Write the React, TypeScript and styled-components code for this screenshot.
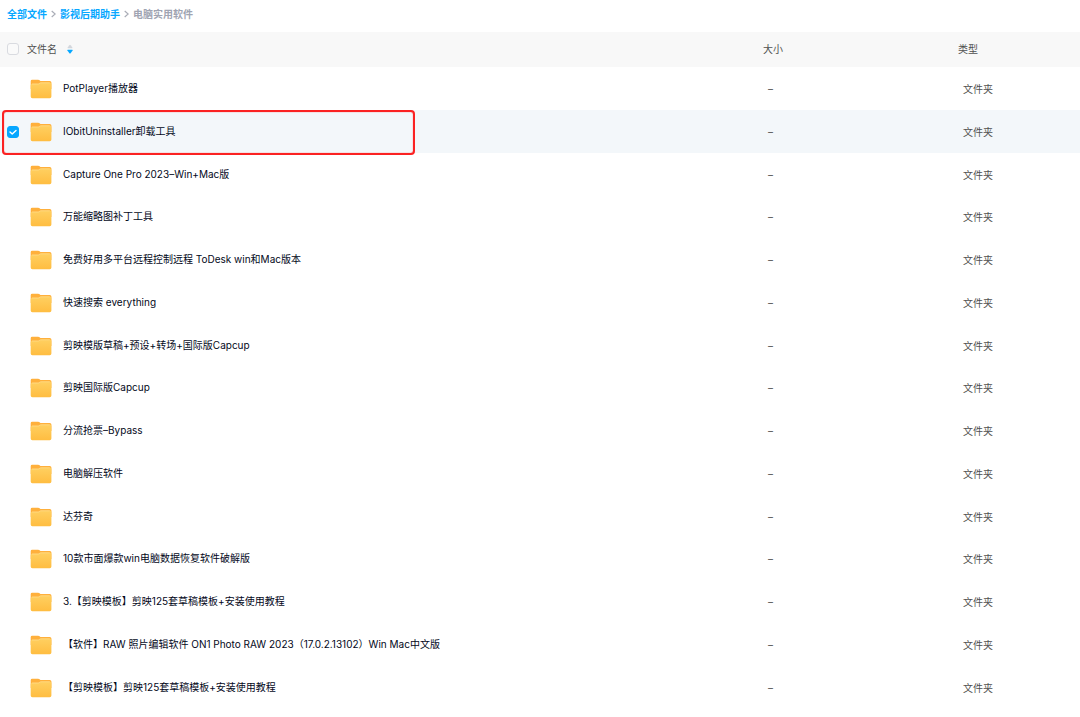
import React, { useState } from "react";
import styled, { createGlobalStyle } from "styled-components";

const Global = createGlobalStyle`
  * { box-sizing: border-box; }
  body {
    margin: 0;
    background: #fff;
    color: #03081a;
    font: 10px/16px Inter, "Noto Sans CJK SC", sans-serif;
  }
`;

const Breadcrumb = styled.nav`
  display: flex;
  align-items: center;
  gap: 4px;
  height: 32px;
  padding: 0 7px 4px;
  font-weight: 700;
`;

const Crumb = styled.a`
  color: #06a7ff;
  text-decoration: none;
`;

const CurrentCrumb = styled.span`
  color: #a0a4b2;
`;

const FileTable = styled.table`
  width: 100%;
  table-layout: fixed;
  border-collapse: collapse;
`;

const NameCol = styled.col``;
const SizeCol = styled.col`
  width: 195px;
`;
const TypeCol = styled.col`
  width: 122px;
`;

const HeadRow = styled.tr`
  height: 35px;
  background: #f8f8f8;
`;

const HeadCell = styled.th`
  padding: 0 0 1px;
  color: #505050;
  font-weight: 400;
  text-align: left;
`;

const HeadContent = styled.div`
  display: flex;
  align-items: center;
  gap: 8px;
  padding-left: 7px;
`;

const SortButton = styled.button`
  display: flex;
  align-items: center;
  gap: 9px;
  padding: 0;
  border: 0;
  background: none;
  color: inherit;
  font: inherit;
  cursor: pointer;
`;

const Row = styled.tr<{ $selected: boolean }>`
  height: 43px;
  background: ${(p) => (p.$selected ? "#f3f7fa" : "#fff")};

  &:nth-child(4n) {
    height: 42px;
  }
`;

const NameCell = styled.td`
  position: relative;
  padding: 0;
`;

const NameContent = styled.div`
  display: flex;
  align-items: center;
  padding-left: 7px;
`;

const MetaCell = styled.td`
  padding: 0 0 0 5px;
  color: #505050;
`;

const FileLink = styled.a`
  margin-left: 11px;
  padding-bottom: 2px;
  color: inherit;
  text-decoration: none;
  white-space: nowrap;
`;

const FolderSvg = styled.svg`
  flex: none;
  margin-left: 11px;
`;

const Check = styled.input<{ $quiet?: boolean }>`
  appearance: none;
  flex: none;
  width: 12px;
  height: 12px;
  margin: 0;
  border: 1px solid #d9dbe0;
  border-radius: 3px;
  background: #fafafa;
  opacity: ${(p) => (p.$quiet ? 0 : 1)};

  &:hover,
  &:focus-visible {
    opacity: 1;
  }

  &:checked {
    border-color: #06a7ff;
    background: #06a7ff;
    opacity: 1;
  }
`;

const CheckBox = styled.label`
  position: relative;
  display: flex;
  flex: none;
`;

const Tick = styled.svg`
  position: absolute;
  inset: 0;
  pointer-events: none;
`;

const Highlight = styled.span`
  position: absolute;
  top: 0;
  left: 2px;
  width: 413px;
  height: 45px;
  border: 2px solid #fb2222;
  border-radius: 4px;
  box-shadow: inset 0 0 1px #fb2222;
  pointer-events: none;
  z-index: 1;
`;

const files = [
  "PotPlayer播放器",
  "IObitUninstaller卸载工具",
  "Capture One Pro 2023–Win+Mac版",
  "万能缩略图补丁工具",
  "免费好用多平台远程控制远程 ToDesk win和Mac版本",
  "快速搜索 everything",
  "剪映模版草稿+预设+转场+国际版Capcup",
  "剪映国际版Capcup",
  "分流抢票–Bypass",
  "电脑解压软件",
  "达芬奇",
  "10款市面爆款win电脑数据恢复软件破解版",
  "3.【剪映模板】剪映125套草稿模板+安装使用教程",
  "【软件】RAW 照片编辑软件 ON1 Photo RAW 2023（17.0.2.13102）Win Mac中文版",
  "【剪映模板】剪映125套草稿模板+安装使用教程",
];

const Separator = () => (
  <svg width="5" height="8" viewBox="0 0 5 8" fill="none" stroke="#a9acb6" strokeWidth="1.2" aria-hidden="true">
    <path d="M.7 1 4.2 4 .7 7" />
  </svg>
);

const SortIcon = () => (
  <svg width="8" height="10" viewBox="0 0 8 10" aria-hidden="true">
    <path d="M3.4 1.2a.8.8 0 0 1 1.2 0L6.4 3.5q.4.8-.5.8H2.1q-.9 0-.5-.8Z" fill="#d3d6dc" />
    <path d="M3.4 9.2a.8.8 0 0 0 1.2 0L6.6 6.6q.4-.9-.5-.9H1.9q-.9 0-.5.9Z" fill="#06a7ff" />
  </svg>
);

const FolderIcon = () => (
  <FolderSvg width="22" height="20" viewBox="0 0 22 20" aria-hidden="true">
    <defs>
      <linearGradient id="folderFront" x1="0" y1="0" x2="0" y2="1">
        <stop offset="0" stopColor="#ffd061" />
        <stop offset="1" stopColor="#ffbd41" />
      </linearGradient>
    </defs>
    <path d="M.7 2.2Q.7.8 2.1.8h6.1q.8 0 1.4.5l.8.7h9.4q1.6 0 1.6 1.6V10H.7Z" fill="#ffb03c" />
    <path d="M.7 6.2q0-1.5 1.5-1.5h5.6q.9 0 1.5-.5l.7-.5q.5-.3 1.2-.3h8.7q1.5 0 1.5 1.5v12.6q0 1.7-1.7 1.7H2.4q-1.7 0-1.7-1.7Z" fill="url(#folderFront)" />
    <path d="M2 5h5.9q.9 0 1.5-.5l.6-.4q.5-.3 1.1-.3h8.7" fill="none" stroke="#ffe09a" strokeWidth=".6" />
  </FolderSvg>
);

export default function App() {
  const [selected, setSelected] = useState<number[]>([1]);
  const toggle = (i: number) =>
    setSelected((s) => (s.includes(i) ? s.filter((n) => n !== i) : [...s, i]));

  return (
    <>
      <Global />
      <Breadcrumb aria-label="路径">
        <Crumb href="#all">全部文件</Crumb>
        <Separator />
        <Crumb href="#helper">影视后期助手</Crumb>
        <Separator />
        <CurrentCrumb aria-current="page">电脑实用软件</CurrentCrumb>
      </Breadcrumb>
      <FileTable>
        <colgroup>
          <NameCol />
          <SizeCol />
          <TypeCol />
        </colgroup>
        <thead>
          <HeadRow>
            <HeadCell scope="col">
              <HeadContent>
                <Check
                  type="checkbox"
                  aria-label="全选"
                  checked={selected.length === files.length}
                  onChange={(e) => setSelected(e.target.checked ? files.map((_, i) => i) : [])}
                />
                <SortButton type="button">
                  文件名
                  <SortIcon />
                </SortButton>
              </HeadContent>
            </HeadCell>
            <HeadCell scope="col">大小</HeadCell>
            <HeadCell scope="col">类型</HeadCell>
          </HeadRow>
        </thead>
        <tbody>
          {files.map((name, i) => {
            const checked = selected.includes(i);
            return (
              <Row key={name} $selected={checked}>
                <NameCell>
                  <NameContent>
                    <CheckBox>
                      <Check
                        type="checkbox"
                        $quiet
                        aria-label={name}
                        checked={checked}
                        onChange={() => toggle(i)}
                      />
                      {checked && (
                        <Tick width="12" height="12" viewBox="0 0 12 12" fill="none" stroke="#fff" strokeWidth="1.4" strokeLinecap="round" strokeLinejoin="round">
                          <path d="m3 6 2.2 2.1L9 4.4" />
                        </Tick>
                      )}
                    </CheckBox>
                    <FolderIcon />
                    <FileLink href="#folder">{name}</FileLink>
                  </NameContent>
                  {i === 1 && <Highlight />}
                </NameCell>
                <MetaCell>–</MetaCell>
                <MetaCell>文件夹</MetaCell>
              </Row>
            );
          })}
        </tbody>
      </FileTable>
    </>
  );
}
